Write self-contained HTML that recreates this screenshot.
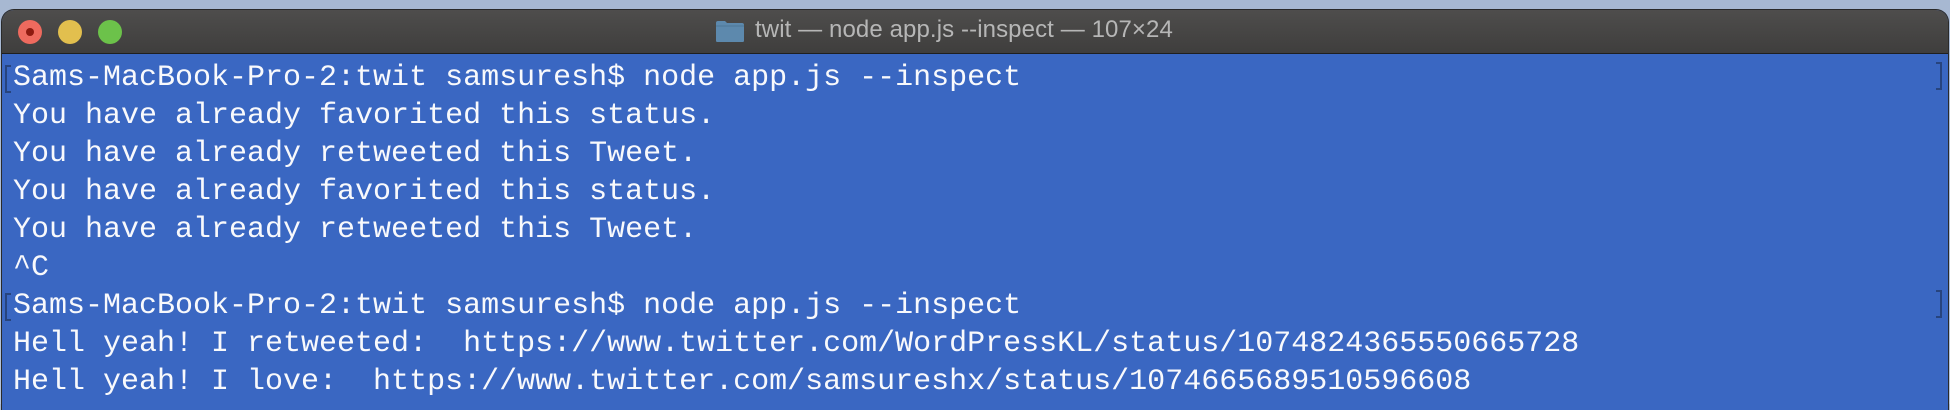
<!DOCTYPE html>
<html><head><meta charset="utf-8"><style>
html,body{margin:0;padding:0}
body{width:1950px;height:404px;overflow:hidden;background:linear-gradient(#a7b8d2,#b3c3da);position:relative}
.win{position:absolute;left:2px;top:10px;width:1946px;height:400px;border-radius:12px 12px 0 0;overflow:hidden;background:#3a67c2;box-shadow:0 0 0 1px #2a2a2a}
.tb{position:absolute;left:0;top:0;width:100%;height:43px;background:linear-gradient(#4e4d4c,#3f3e3d);border-bottom:1px solid #1f1f1f}
.dot{position:absolute;top:10px;width:24px;height:24px;border-radius:50%}
.title{position:absolute;left:753px;top:6px;font:24px "Liberation Sans",sans-serif;color:#b6b6b6;white-space:nowrap;letter-spacing:0.1px}
.folder{position:absolute;left:713px;top:10px;width:30px;height:23px}
.term{position:absolute;left:11px;top:49px;font:30px/38px "Liberation Mono",monospace;color:#f8f9fc;white-space:pre}
.br{position:absolute;width:4px;height:24px;border:2px solid #27447e;}
</style></head><body>
<div class="win">
 <div class="tb">
  <div class="dot" style="left:16px;background:#ee6a5e"><div style="position:absolute;left:8px;top:8px;width:8px;height:8px;border-radius:50%;background:#8e1a10"></div></div>
  <div class="dot" style="left:56px;background:#e2bf4e"></div>
  <div class="dot" style="left:96px;background:#6cc24a"></div>
  <svg class="folder" viewBox="0 0 30 23"><path d="M1 3 Q1 1 3 1 H10 L12 3 H27 Q29 3 29 5 V21 Q29 22 27 22 H3 Q1 22 1 21 Z" fill="#5d89ad"/><path d="M1 6 H29" stroke="#4d7697" stroke-width="1"/></svg>
  <div class="title">twit — node app.js --inspect — 107×24</div>
 </div>
 <div class="br" style="left:3px;top:55px;border-right:none"></div>
 <div class="br" style="left:3px;top:283px;border-right:none"></div>
 <div class="br" style="left:1934px;top:52px;border-left:none"></div>
 <div class="br" style="left:1934px;top:280px;border-left:none"></div>
<div class="term">Sams-MacBook-Pro-2:twit samsuresh$ node app.js --inspect
You have already favorited this status.
You have already retweeted this Tweet.
You have already favorited this status.
You have already retweeted this Tweet.
^C
Sams-MacBook-Pro-2:twit samsuresh$ node app.js --inspect
Hell yeah! I retweeted:  https://www.twitter.com/WordPressKL/status/1074824365550665728
Hell yeah! I love:  https://www.twitter.com/samsureshx/status/1074665689510596608</div>
</div>
</body></html>
